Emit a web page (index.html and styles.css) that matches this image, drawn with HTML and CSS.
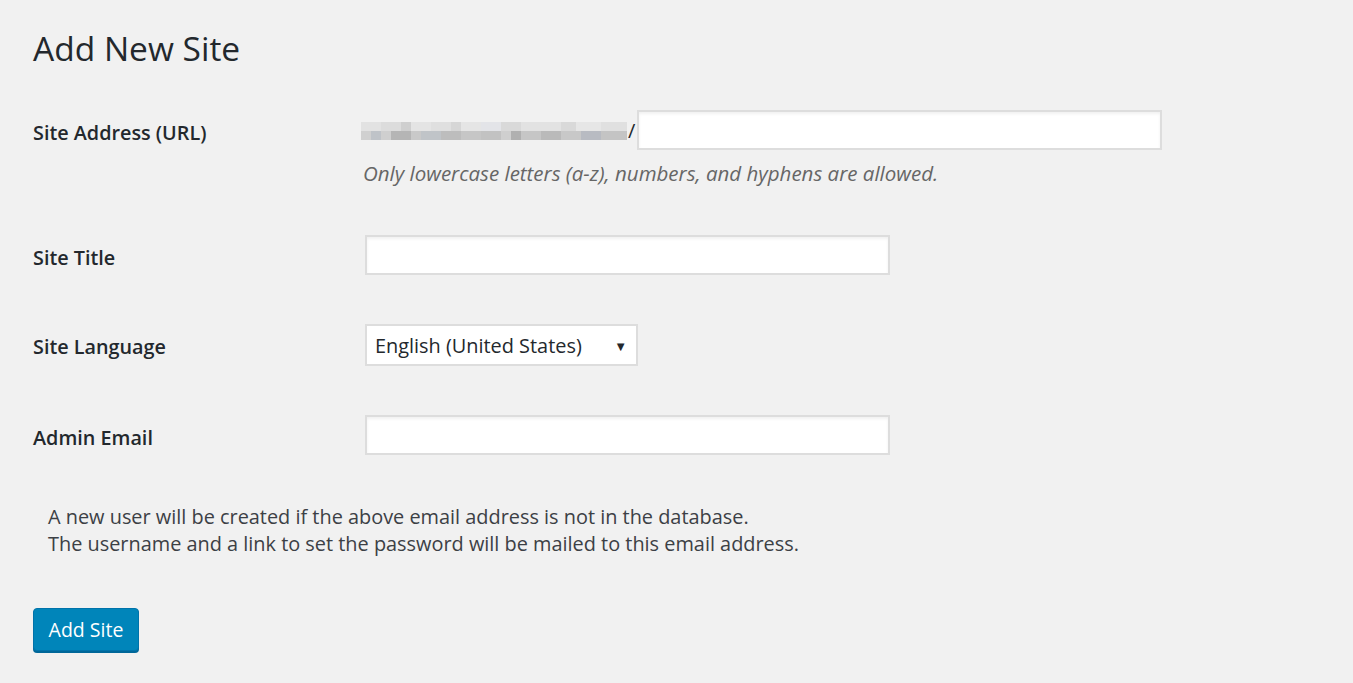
FILE: index.html
```html
<!DOCTYPE html>
<html lang="en">
<head>
<meta charset="utf-8">
<title>Add New Site</title>
<link rel="stylesheet" href="styles.css">
</head>
<body>
<div class="wrap">
  <h1 class="page-title">Add New Site</h1>
  <form class="site-form">
    <div class="row row-url">
      <label class="label" for="site-address">Site Address (URL)</label>
      <div class="field">
        <div class="url-line">
          <span class="blur" aria-hidden="true">
            <span class="blur-top"></span>
            <span class="blur-bottom"></span>
          </span>
          <span class="slash">/</span>
          <input id="site-address" class="input input-url" type="text">
        </div>
        <p class="hint">Only lowercase letters (a-z), numbers, and hyphens are allowed.</p>
      </div>
    </div>
    <div class="row row-title">
      <label class="label" for="site-title">Site Title</label>
      <div class="field"><input id="site-title" class="input input-wide" type="text"></div>
    </div>
    <div class="row row-lang">
      <label class="label" for="site-lang">Site Language</label>
      <div class="field">
        <div class="select" id="site-lang">
          <span class="select-text">English (United States)</span>
          <span class="select-arrow">▼</span>
        </div>
      </div>
    </div>
    <div class="row row-email">
      <label class="label" for="admin-email">Admin Email</label>
      <div class="field"><input id="admin-email" class="input input-wide" type="text"></div>
    </div>
    <p class="note">A new user will be created if the above email address is not in the database.<br>The username and a link to set the password will be mailed to this email address.</p>
    <button type="button" class="btn-primary">Add Site</button>
  </form>
</div>
</body>
</html>
```
FILE: styles.css
```css
html, body {
  margin: 0;
  padding: 0;
  background: #f1f1f1;
}
body {
  font-family: "Open Sans", "Noto Sans", sans-serif;
  color: #23282d;
  width: 1353px;
  height: 683px;
  overflow: hidden;
}
.wrap {
  padding: 0 0 0 33px;
}
.page-title {
  margin: 0;
  padding-top: 27px;
  font-size: 33.5px;
  font-weight: 400;
  line-height: 42px;
  color: #23282d;
}
.site-form {
  margin: 0;
  padding-top: 41px;
}
.row {
  display: grid;
  grid-template-columns: 332px 1fr;
  align-items: start;
}
.label {
  font-size: 19.8px;
  font-weight: 600;
  line-height: 24px;
  padding-top: 11px;
}
.url-line {
  display: flex;
  align-items: center;
  margin-left: -4px;
}
.blur {
  display: flex;
  flex-direction: column;
  width: 266px;
  height: 18px;
  margin-top: 2px;
}
.blur-top {
  height: 9px;
  background: linear-gradient(90deg,
    #e2e2e2 0 20px, #dcdcdc 20px 40px, #cfcfcf 40px 50px, #e4e4e4 50px 70px,
    #dfdfdf 70px 90px, #d6d6d6 90px 100px, #e5e5e5 100px 120px, #e3e4e8 120px 140px,
    #d9d9d9 140px 160px, #e2e2e2 160px 200px, #d9d9d9 200px 215px, #e6e6e6 215px 240px,
    #e0e0e0 240px 266px);
}
.blur-bottom {
  height: 9px;
  background: linear-gradient(90deg,
    #d0d0d0 0 10px, #bfc3c8 10px 20px, #cfcfcf 20px 30px, #b5b5b5 30px 50px,
    #c9c9c9 50px 60px, #c0c4c8 60px 80px, #bdbdbd 80px 100px, #c6c6c6 100px 120px,
    #c2c2c2 120px 140px, #cfcfcf 140px 150px, #b0b0b0 150px 160px, #c6c6c6 160px 180px,
    #bababa 180px 200px, #c8c8c8 200px 220px, #b8bbc2 220px 240px, #c4c4c4 240px 266px);
}
.slash {
  font-size: 20px;
  line-height: 24px;
  color: #23282d;
  margin: 2px 0 0 1px;
  width: 8px;
}
.input {
  box-sizing: border-box;
  height: 40px;
  border: 2px solid #dddddd;
  background: #ffffff;
  box-shadow: inset 0 2px 3px rgba(0,0,0,0.06);
  margin: 0;
  padding: 0 8px;
  font-family: inherit;
  font-size: 18px;
  outline: none;
}
.input-url {
  width: 525px;
  margin-left: 1px;
}
.input-wide {
  width: 525px;
}
.hint {
  margin: 10px 0 0 -2px;
  font-size: 20.5px;
  line-height: 26px;
  font-style: italic;
  color: #666666;
}
.row-title {
  margin-top: 49px;
}
.row-lang {
  margin-top: 49px;
}
.row-email {
  margin-top: 49px;
}
.select {
  box-sizing: border-box;
  width: 273px;
  height: 42px;
  border: 2px solid #dddddd;
  background: #ffffff;
  display: flex;
  align-items: center;
  justify-content: space-between;
  padding: 1px 9px 0 8px;
  font-size: 19.9px;
}
.select-arrow {
  font-size: 13px;
  color: #23282d;
}
.note {
  margin: 48px 0 0 15px;
  font-size: 19.9px;
  line-height: 27px;
  color: #3c4045;
}
.btn-primary {
  margin-top: 51px;
  box-sizing: border-box;
  height: 43px;
  width: 106px;
  padding: 0 0 1px;
  background: #0085ba;
  border: 1px solid #0073aa;
  border-radius: 4px;
  box-shadow: 0 2px 0 #006799;
  color: #ffffff;
  font-family: inherit;
  font-size: 19.5px;
  cursor: pointer;
}
```
